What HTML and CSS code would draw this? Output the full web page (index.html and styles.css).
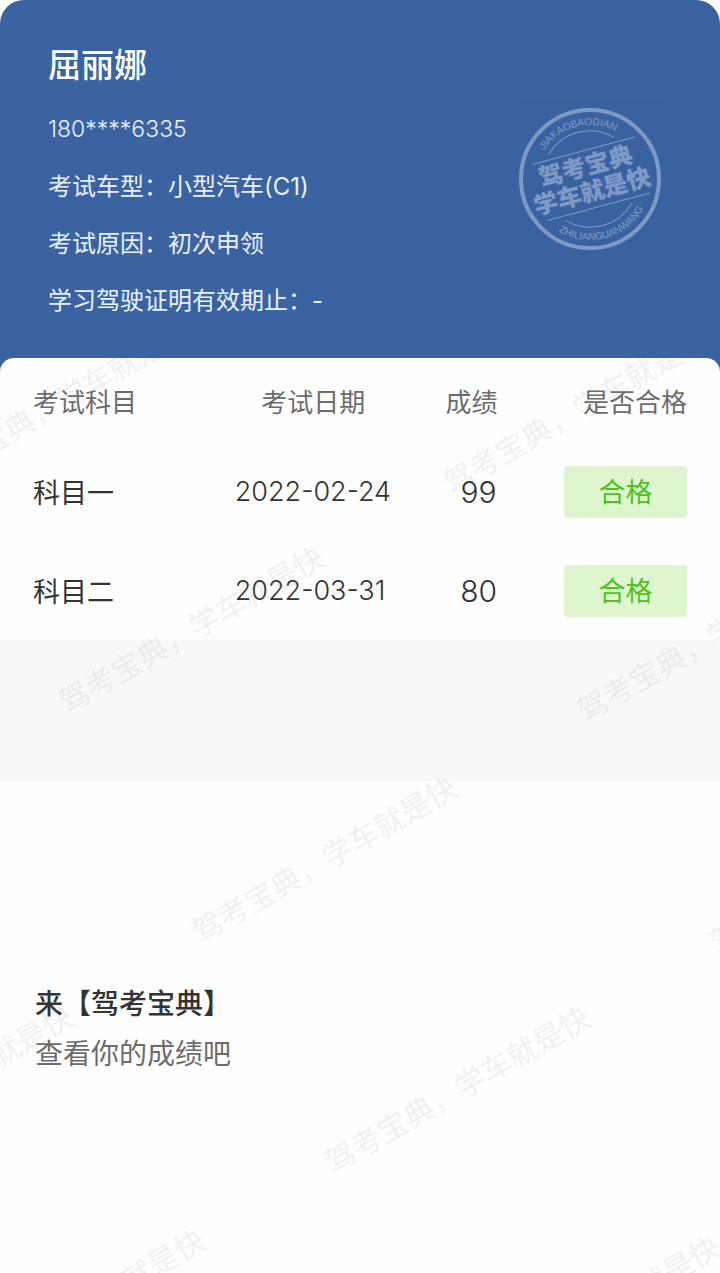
FILE: index.html
```html
<!DOCTYPE html>
<html lang="zh-CN">
<head>
<meta charset="utf-8">
<meta name="viewport" content="width=device-width, initial-scale=1">
<title>考试成绩</title>
<link rel="stylesheet" href="styles.css">
</head>
<body>
<main class="page">
  <header class="profile">
    <div class="profile-info">
      <h1 class="name">屈丽娜</h1>
      <p class="line phone">180****6335</p>
      <p class="line">考试车型：小型汽车(C1)</p>
      <p class="line">考试原因：初次申领</p>
      <p class="line">学习驾驶证明有效期止：-</p>
    </div>
    <svg class="stamp" viewBox="-72 -72 144 144" role="img" aria-label="驾考宝典 学车就是快">
      <defs>
        <path id="arc-top" d="M-54 0A54 54 0 0 1 54 0"/>
        <path id="arc-bottom" d="M-61 0A61 61 0 0 0 61 0"/>
      </defs>
      <circle class="stamp-ring" r="69"/>
      <g transform="rotate(-15)">
        <path class="stamp-line" d="M-34 -34A48 48 0 0 1 34 -34M-34 34A48 48 0 0 0 34 34M-52 -29H54M-52 29H54"/>
        <text class="stamp-latin"><textPath href="#arc-top" startOffset="50%">JIAKAOBAODIAN</textPath></text>
        <text class="stamp-latin"><textPath href="#arc-bottom" startOffset="50%">ZHILIANGUANWANG</textPath></text>
        <text class="stamp-title" x="-1" y="-5">驾考宝典</text>
        <text class="stamp-title" x="-1" y="21">学车就是快</text>
      </g>
    </svg>
  </header>

  <div class="sheet">
    <table class="scores">
      <colgroup><col class="col-subject"><col class="col-date"><col class="col-score"><col class="col-result"></colgroup>
      <thead>
        <tr><th scope="col">考试科目</th><th scope="col">考试日期</th><th scope="col">成绩</th><th scope="col">是否合格</th></tr>
      </thead>
      <tbody>
        <tr><td>科目一</td><td class="date">2022-02-24</td><td class="score">99</td><td><span class="badge">合格</span></td></tr>
        <tr><td>科目二</td><td class="date">2022-03-31</td><td class="score">80</td><td><span class="badge">合格</span></td></tr>
      </tbody>
    </table>
    <div class="band"></div>
    <footer class="promo">
      <p class="promo-title">来【驾考宝典】</p>
      <p class="promo-text">查看你的成绩吧</p>
    </footer>
    <svg class="watermark" aria-hidden="true">
      <text transform="translate(-66 129) rotate(-30)">驾考宝典，学车就是快</text>
      <text transform="translate(451 137) rotate(-30)">驾考宝典，学车就是快</text>
      <text transform="translate(67 356) rotate(-30)">驾考宝典，学车就是快</text>
      <text transform="translate(585 365) rotate(-30)">驾考宝典，学车就是快</text>
      <text transform="translate(200 586) rotate(-30)">驾考宝典，学车就是快</text>
      <text transform="translate(718 597) rotate(-30)">驾考宝典，学车就是快</text>
      <text transform="translate(-184 815) rotate(-30)">驾考宝典，学车就是快</text>
      <text transform="translate(333 816) rotate(-30)">驾考宝典，学车就是快</text>
      <text transform="translate(-52 1039) rotate(-30)">驾考宝典，学车就是快</text>
      <text transform="translate(463 1046) rotate(-30)">驾考宝典，学车就是快</text>
    </svg>
  </div>
</main>
</body>
</html>
```
FILE: styles.css
```css
* {
  box-sizing: border-box;
}

html {
  background: #fefefe;
}

body {
  margin: 0;
  background: #fefefe;
  color: #333;
  font-family: Inter, "Noto Sans CJK SC", sans-serif;
  font-weight: 300;
}

h1,
p {
  margin: 0;
}

.page {
  display: flex;
  flex-direction: column;
  min-height: 100vh;
  overflow: hidden;
  background: #3b63a1;
  border-radius: 24px 24px 0 0;
}

.profile {
  display: flex;
  justify-content: space-between;
  align-items: flex-start;
  padding: 37px 58px 29px 48px;
  color: #eaf1ff;
}

.name {
  margin-bottom: 8px;
  font-size: 33px;
  line-height: 56px;
  font-weight: 500;
  color: #fff;
}

.line {
  font-size: 24px;
  line-height: 57px;
  font-weight: 400;
}

.phone {
  font-size: 23px;
  font-weight: 300;
}

.stamp {
  flex: none;
  width: 144px;
  height: 144px;
  margin-top: 70px;
  opacity: 0.4;
}

.stamp-ring,
.stamp-line {
  fill: none;
  stroke: #e3eaff;
}

.stamp-ring {
  stroke-width: 4px;
}

.stamp-line {
  stroke-width: 1px;
}

.stamp text {
  fill: #e3eaff;
  text-anchor: middle;
}

.stamp-latin {
  font: 10px "Liberation Sans", sans-serif;
}

.stamp-title {
  font: 900 24px "Noto Sans CJK SC", sans-serif;
}

.sheet {
  position: relative;
  flex: 1;
  overflow: hidden;
  background: #fefefe;
  border-radius: 14px 14px 0 0;
}

.scores {
  width: 100%;
  table-layout: fixed;
  border-collapse: collapse;
  font-size: 27px;
}

.col-subject,
.col-date {
  width: 29%;
}

.col-score {
  width: 15%;
}

.scores th,
.scores td {
  padding: 0;
  text-align: center;
  white-space: nowrap;
}

.scores th {
  height: 84px;
  font-size: 26px;
  font-weight: 400;
  color: #6c6c6c;
}

.scores td {
  height: 99px;
  font-weight: 400;
}

.scores th:first-child,
.scores td:first-child {
  padding-left: 33px;
  text-align: left;
}

.scores th:last-child,
.scores td:last-child {
  padding-right: 33px;
  text-align: right;
}

.scores .date {
  padding-left: 26px;
  font-weight: 300;
  font-feature-settings: "case";
  text-align: left;
}

.scores .score {
  padding-left: 14px;
  font-size: 30px;
  font-weight: 300;
}

.badge {
  display: inline-block;
  width: 123px;
  padding-top: 2px;
  border-radius: 4px;
  background: #dff5d0;
  color: #4fc21c;
  line-height: 50px;
  text-align: center;
  vertical-align: middle;
}

.band {
  height: 141px;
  background: #f8f8f8;
}

.promo {
  padding: 198px 35px 40px;
  font-size: 28px;
  line-height: 50px;
}

.promo-title {
  font-weight: 500;
}

.promo-text {
  font-weight: 400;
  color: #6c6c6c;
}

.watermark {
  position: absolute;
  inset: 0;
  width: 100%;
  height: 100%;
  pointer-events: none;
}

.watermark text {
  font: 400 30px "Noto Sans CJK SC", sans-serif;
  fill: #8a9494;
  fill-opacity: 0.15;
}
```
